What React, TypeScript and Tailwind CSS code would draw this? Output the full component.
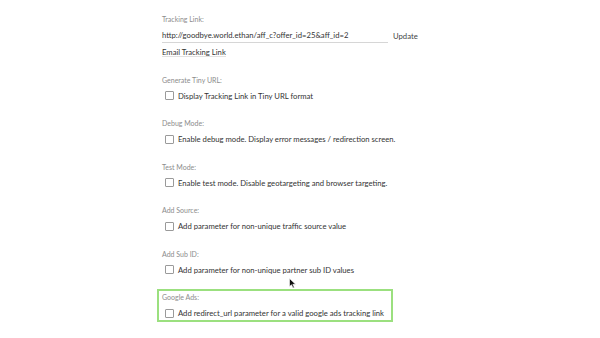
import React from 'react';

const options = [
  { label: 'Generate Tiny URL:', text: 'Display Tracking Link in Tiny URL format' },
  { label: 'Debug Mode:', text: 'Enable debug mode. Display error messages / redirection screen.' },
  { label: 'Test Mode:', text: 'Enable test mode. Disable geotargeting and browser targeting.' },
  { label: 'Add Source:', text: 'Add parameter for non-unique traffic source value' },
  { label: 'Add Sub ID:', text: 'Add parameter for non-unique partner sub ID values' },
  { label: 'Google Ads:', text: 'Add redirect_url parameter for a valid google ads tracking link', active: true },
];

export default function App() {
  return (
    <div className="relative w-[600px] h-[338px] overflow-hidden bg-white text-[#333] font-['Lato','Open_Sans',sans-serif]">
      <div className="ml-[157px] w-[236px] pt-[10px] flex flex-col gap-[10.5px]">
        {/* tracking link */}
        <div className="border-2 border-transparent px-[3px] pb-[2px]">
          <div className="text-[7px] leading-[14px] text-[#8c8c8c]">Tracking Link:</div>
          <div className="mt-[2px] flex items-center">
            <div className="w-[226px] shrink-0 h-[15px] border-b border-[#d6d6d6] text-[7.7px] leading-[14px] whitespace-nowrap">
              http://goodbye.world.ethan/aff_c?offer_id=25&amp;aff_id=2
            </div>
            <button className="ml-[5px] text-[7.7px] leading-[14px] text-[#444]">Update</button>
          </div>
          <div className="mt-[4px] w-fit h-[10px] border-b border-[#e2e2e2] text-[7.7px] leading-[10px] whitespace-nowrap">
            Email Tracking Link
          </div>
        </div>

        {options.map((o) => (
          <div
            key={o.label}
            className={`border-2 px-[3px] ${o.active ? 'border-[#9be07f]' : 'border-transparent'}`}
          >
            <div className="text-[7px] leading-[12px] text-[#8c8c8c]">{o.label}</div>
            <label className="mt-[3px] flex items-center h-[14px] whitespace-nowrap">
              <span className="ml-[3px] w-[9px] h-[9px] shrink-0 rounded-[1px] border border-[#9a9a9a] bg-white" />
              <span className="ml-[4px] text-[7.7px] leading-[14px]">{o.text}</span>
            </label>
          </div>
        ))}
      </div>

      {/* mouse pointer */}
      <svg className="absolute left-[289px] top-[278px]" width="8" height="11" viewBox="0 0 8 11">
        <path d="M0.5 0.5 L0.5 8.5 L2.5 6.8 L4 10 L5.3 9.4 L3.8 6.3 L6.6 6.3 Z" fill="#111" stroke="#fff" strokeWidth="0.6" />
      </svg>
    </div>
  );
}
